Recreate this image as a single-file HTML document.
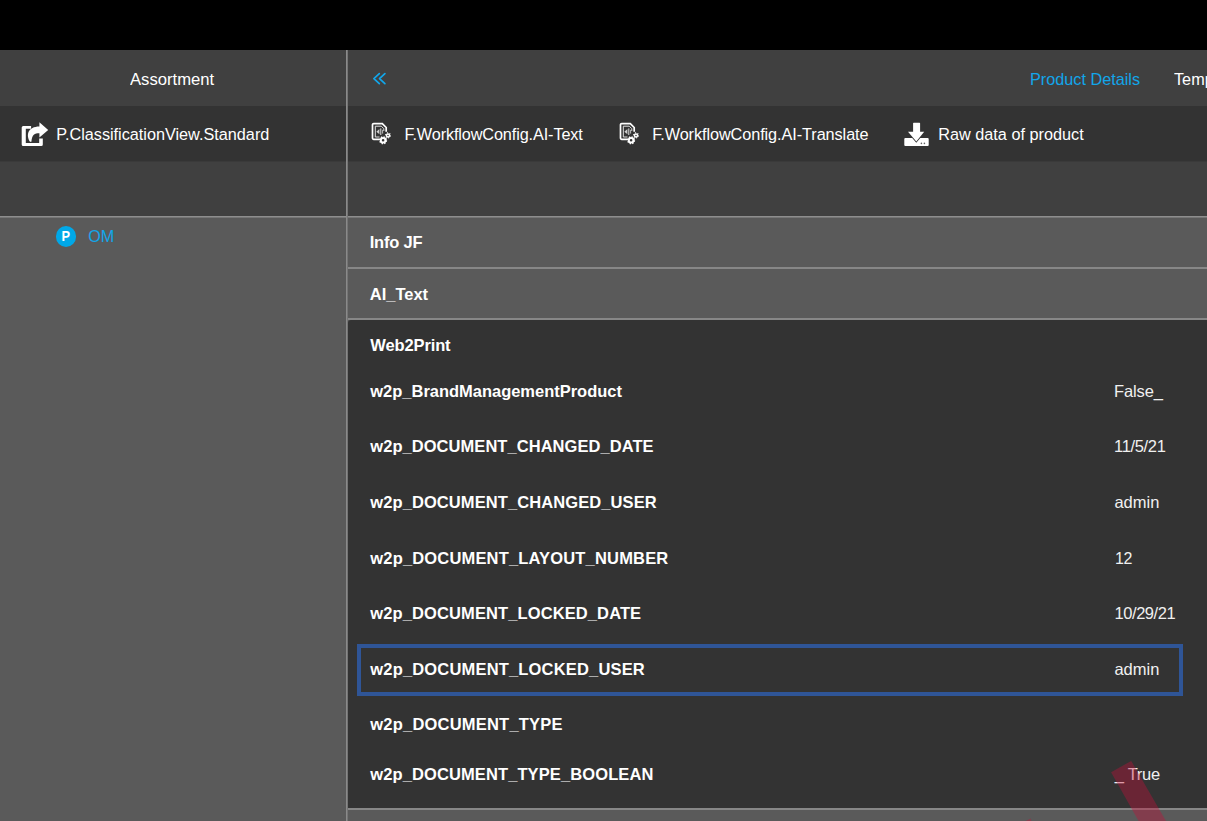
<!DOCTYPE html>
<html lang="en">
<head>
<meta charset="utf-8">
<title>Product Details</title>
<style>
html,body{margin:0;padding:0;}
body{width:1207px;height:821px;overflow:hidden;background:#404040;position:relative;font-family:"Liberation Sans",Arial,sans-serif;font-size:16px;color:#fff;}
.abs{position:absolute;}
.t{position:absolute;white-space:nowrap;line-height:20px;height:20px;}
.b{font-weight:bold;font-size:16.5px;}
.blue{color:#12a6ea;}
.v{color:#f0f0f0;font-size:16.5px;}
</style>
</head>
<body>
<!-- top black bar -->
<div class="abs" style="left:0;top:0;width:1207px;height:50px;background:#000;"></div>

<!-- toolbar rows -->
<div class="abs" style="left:0;top:106px;width:1207px;height:55px;background:#333;"></div>
<div class="abs" style="left:0;top:161px;width:1207px;height:1px;background:#3a3a3a;"></div>

<!-- lower-left tree area -->
<div class="abs" style="left:0;top:216px;width:346px;height:605px;background:#5a5a5a;"></div>
<!-- right content area -->
<div class="abs" style="left:348px;top:216px;width:859px;height:605px;background:#5a5a5a;"></div>

<!-- horizontal separator under header -->
<div class="abs" style="left:0;top:216px;width:1207px;height:1px;background:#8e8e8e;"></div>
<div class="abs" style="left:0;top:217px;width:1207px;height:1px;background:#767676;"></div>

<!-- section separators -->
<div class="abs" style="left:348px;top:267px;width:859px;height:2px;background:#878787;"></div>
<div class="abs" style="left:348px;top:318px;width:859px;height:2px;background:#878787;"></div>

<!-- Web2Print panel -->
<div class="abs" style="left:348px;top:320px;width:859px;height:488px;background:#333;border-top-left-radius:3px;"></div>
<div class="abs" style="left:348px;top:808px;width:859px;height:2px;background:#878787;"></div>

<!-- vertical divider -->
<div class="abs" style="left:346px;top:50px;width:1px;height:771px;background:#8a8a8a;"></div>
<div class="abs" style="left:347px;top:50px;width:1px;height:771px;background:#747474;"></div>

<!-- left header -->
<div id="t1" class="t" style="left:129.600px;top:69.600px;font-size:17px;letter-spacing:0px;transform:scaleX(0.980);transform-origin:0 0;">Assortment</div>
<svg class="abs" style="left:21px;top:122px;" width="28" height="25" viewBox="0 0 28 25">
  <path d="M10.100 3.900 H2.200 A1.500 1.500 0 0 0 0.700 5.400 V22.600 A1.500 1.500 0 0 0 2.200 24.100 H20.300 A1.500 1.500 0 0 0 21.800 22.600 V16.400 H18.200 V20.900 H4.800 V6.700 H10.100 Z" fill="#fff"/>
  <path d="M18.400 0.300 L27.200 7.900 L18.400 15.400 V11.300 C13.500 11.300 11.200 12.500 10.400 19.800 L9 19.800 C4.700 13 7 4.500 18.400 4.500 Z" fill="#fff"/>
</svg>
<div id="t2" class="t" style="left:56.2px;top:124px;font-size:16.25px;letter-spacing:-0.013px;">P.ClassificationView.Standard</div>

<!-- tree item -->
<div class="abs" style="left:55.500px;top:226px;width:20.800px;height:20.800px;border-radius:50%;background:#00a8e8;"></div>
<svg class="abs" style="left:55px;top:225px;" width="23" height="23" viewBox="0 0 23 23"><text x="6.500" y="16.400" transform="translate(6.500 0) scale(0.900 1) translate(-6.500 0)" font-family="Liberation Sans, Arial, sans-serif" font-weight="bold" font-size="14.200" fill="#fff">P</text></svg>
<div id="t4" class="t blue" style="left:88.200px;top:225.500px;font-size:16.200px;letter-spacing:-0.100px;">OM</div>

<!-- right header -->
<svg class="abs" style="left:370px;top:70px;" width="20" height="18" viewBox="0 0 20 18">
  <path d="M9.300 3.600 L3.900 8.600 L9.300 13.700 M14.900 3.600 L9.500 8.600 L14.900 13.700" fill="none" stroke="#12a6ea" stroke-width="1.700" stroke-linecap="round" stroke-linejoin="round"/>
</svg>
<div id="t6" class="t blue" style="left:1029.800px;top:69.600px;font-size:17px;letter-spacing:0px;transform:scaleX(0.955);transform-origin:0 0;">Product Details</div>
<div id="t7" class="t" style="left:1174px;top:69.600px;font-size:17px;letter-spacing:0px;transform:scaleX(0.955);transform-origin:0 0;">Temp</div>

<!-- toolbar -->
<svg class="abs wf" style="left:371px;top:121px;" width="22" height="25" viewBox="0 0 22 25">
  <path d="M2.700 2.600 H11.300 L15.200 6.500 V10.800 M8.800 18.300 H2.700 A1.200 1.200 0 0 1 1.500 17.100 V3.800 A1.200 1.200 0 0 1 2.700 2.600" fill="none" stroke="#fff" stroke-width="1.700"/>
  <path d="M4.300 5.200 V16 H8.500 M4.300 5.200 H10.300 L12.800 7.700 V10" fill="none" stroke="#e0e0e0" stroke-width="1"/>
  <path d="M5.400 10.700 L8.400 8.100 V13.300 Z" fill="#d0d0d0"/>
  <path d="M9.800 7.400 V14" stroke="#e0e0e0" stroke-width="1" fill="none"/>
  <path d="M11.600 8.800 V12.600" stroke="#c8c8c8" stroke-width="0.900" fill="none"/>
  <circle cx="12.100" cy="19.300" r="2.300" fill="none" stroke="#fff" stroke-width="2"/>
  <circle cx="12.100" cy="19.300" r="3.400" fill="none" stroke="#fff" stroke-width="1.300" stroke-dasharray="1.400 1.270"/>
  <circle cx="17" cy="14.400" r="1.500" fill="none" stroke="#fff" stroke-width="1.500"/>
  <circle cx="17" cy="14.400" r="2.500" fill="none" stroke="#fff" stroke-width="1.100" stroke-dasharray="1.100 1.517"/>
</svg>
<div id="t8" class="t" style="left:404.4px;top:124px;font-size:16.25px;letter-spacing:-0.121px;">F.WorkflowConfig.AI-Text</div>
<svg class="abs wf" style="left:618.700px;top:121px;" width="22" height="25" viewBox="0 0 22 25">
  <path d="M2.700 2.600 H11.300 L15.200 6.500 V10.800 M8.800 18.300 H2.700 A1.200 1.200 0 0 1 1.500 17.100 V3.800 A1.200 1.200 0 0 1 2.700 2.600" fill="none" stroke="#fff" stroke-width="1.700"/>
  <path d="M4.300 5.200 V16 H8.500 M4.300 5.200 H10.300 L12.800 7.700 V10" fill="none" stroke="#e0e0e0" stroke-width="1"/>
  <path d="M5.400 10.700 L8.400 8.100 V13.300 Z" fill="#d0d0d0"/>
  <path d="M9.800 7.400 V14" stroke="#e0e0e0" stroke-width="1" fill="none"/>
  <path d="M11.600 8.800 V12.600" stroke="#c8c8c8" stroke-width="0.900" fill="none"/>
  <circle cx="12.100" cy="19.300" r="2.300" fill="none" stroke="#fff" stroke-width="2"/>
  <circle cx="12.100" cy="19.300" r="3.400" fill="none" stroke="#fff" stroke-width="1.300" stroke-dasharray="1.400 1.270"/>
  <circle cx="17" cy="14.400" r="1.500" fill="none" stroke="#fff" stroke-width="1.500"/>
  <circle cx="17" cy="14.400" r="2.500" fill="none" stroke="#fff" stroke-width="1.100" stroke-dasharray="1.100 1.517"/>
</svg>
<div id="t9" class="t" style="left:652.2px;top:124px;font-size:16.25px;letter-spacing:-0.077px;">F.WorkflowConfig.AI-Translate</div>
<svg class="abs" style="left:903px;top:121px;" width="28" height="27" viewBox="0 0 28 27">
  <path d="M10.700 1.700 H16.500 A0.600 0.600 0 0 1 17.100 2.300 V10.700 H21.200 L13.300 20.500 L5 10.700 H10.100 V2.300 A0.600 0.600 0 0 1 10.700 1.700 Z" fill="#fff"/>
  <path d="M2.300 16.900 H9.200 L13.300 21.800 L17.300 16.900 H24.700 A1 1 0 0 1 25.700 17.900 V24 A1 1 0 0 1 24.700 25 H2.300 A1 1 0 0 1 1.300 24 V17.900 A1 1 0 0 1 2.300 16.900 Z" fill="#fff"/>
  <circle cx="18.400" cy="22.400" r="0.800" fill="#666"/>
  <circle cx="21.400" cy="22.400" r="0.800" fill="#666"/>
</svg>
<div id="t10" class="t" style="left:938.2px;top:124px;font-size:16.25px;letter-spacing:0.005px;">Raw data of product</div>

<!-- section headers -->
<div id="t11" class="t b" style="left:369.7px;top:232px;letter-spacing:-0.18px;">Info JF</div>
<div id="t12" class="t b" style="left:369.8px;top:284px;letter-spacing:-0.015px;">AI_Text</div>
<div id="t13" class="t b" style="left:370.3px;top:335px;letter-spacing:-0.124px;">Web2Print</div>

<!-- highlighted row -->
<div class="abs" style="left:357px;top:644px;width:818px;height:44px;border:4px solid #2f5597;"></div>

<!-- attributes -->
<div id="t14" class="t b" style="left:370.3px;top:381px;letter-spacing:-0.02px;">w2p_BrandManagementProduct</div><div id="t15" class="t v" style="left:1114.1px;top:381px;letter-spacing:-0.150px;">False_</div>
<div id="t16" class="t b" style="left:370.3px;top:436px;letter-spacing:0.05px;">w2p_DOCUMENT_CHANGED_DATE</div><div id="t17" class="t v" style="left:1114.1px;top:436px;letter-spacing:-0.340px;">11/5/21</div>
<div id="t18" class="t b" style="left:370.3px;top:492px;letter-spacing:0.09px;">w2p_DOCUMENT_CHANGED_USER</div><div id="t19" class="t v" style="left:1114.400px;top:492px;letter-spacing:0px;">admin</div>
<div id="t20" class="t b" style="left:370.3px;top:548px;letter-spacing:0.17px;">w2p_DOCUMENT_LAYOUT_NUMBER</div><div id="t21" class="t v" style="left:1115.1px;top:549px;letter-spacing:-0.45px;font-size:16px;">12</div>
<div id="t22" class="t b" style="left:370.3px;top:603px;letter-spacing:0.11px;">w2p_DOCUMENT_LOCKED_DATE</div><div id="t23" class="t v" style="left:1114.600px;top:603px;letter-spacing:-0.460px;">10/29/21</div>
<div id="t24" class="t b" style="left:370.3px;top:659px;letter-spacing:0.175px;">w2p_DOCUMENT_LOCKED_USER</div><div id="t25" class="t v" style="left:1114.400px;top:659px;letter-spacing:0px;">admin</div>
<div id="t26" class="t b" style="left:370.3px;top:714px;letter-spacing:0.21px;">w2p_DOCUMENT_TYPE</div>
<div id="t27" class="t b" style="left:370.3px;top:764px;letter-spacing:0.105px;">w2p_DOCUMENT_TYPE_BOOLEAN</div><div id="t28" class="t v" style="left:1114.7px;top:764px;letter-spacing:-0.250px;">_ True</div>

<!-- red annotation stripe -->
<svg class="abs" style="left:1000px;top:740px;" width="207" height="81" viewBox="0 0 207 81">
  <polygon points="111.100,32.200 131.200,20.900 166,81 138.600,81" fill="#c4103a" fill-opacity="0.380"/>
  <polygon points="30.700,78.500 31.300,81 25.500,81" fill="#c4103a" fill-opacity="0.380"/>
</svg>
</body>
</html>
